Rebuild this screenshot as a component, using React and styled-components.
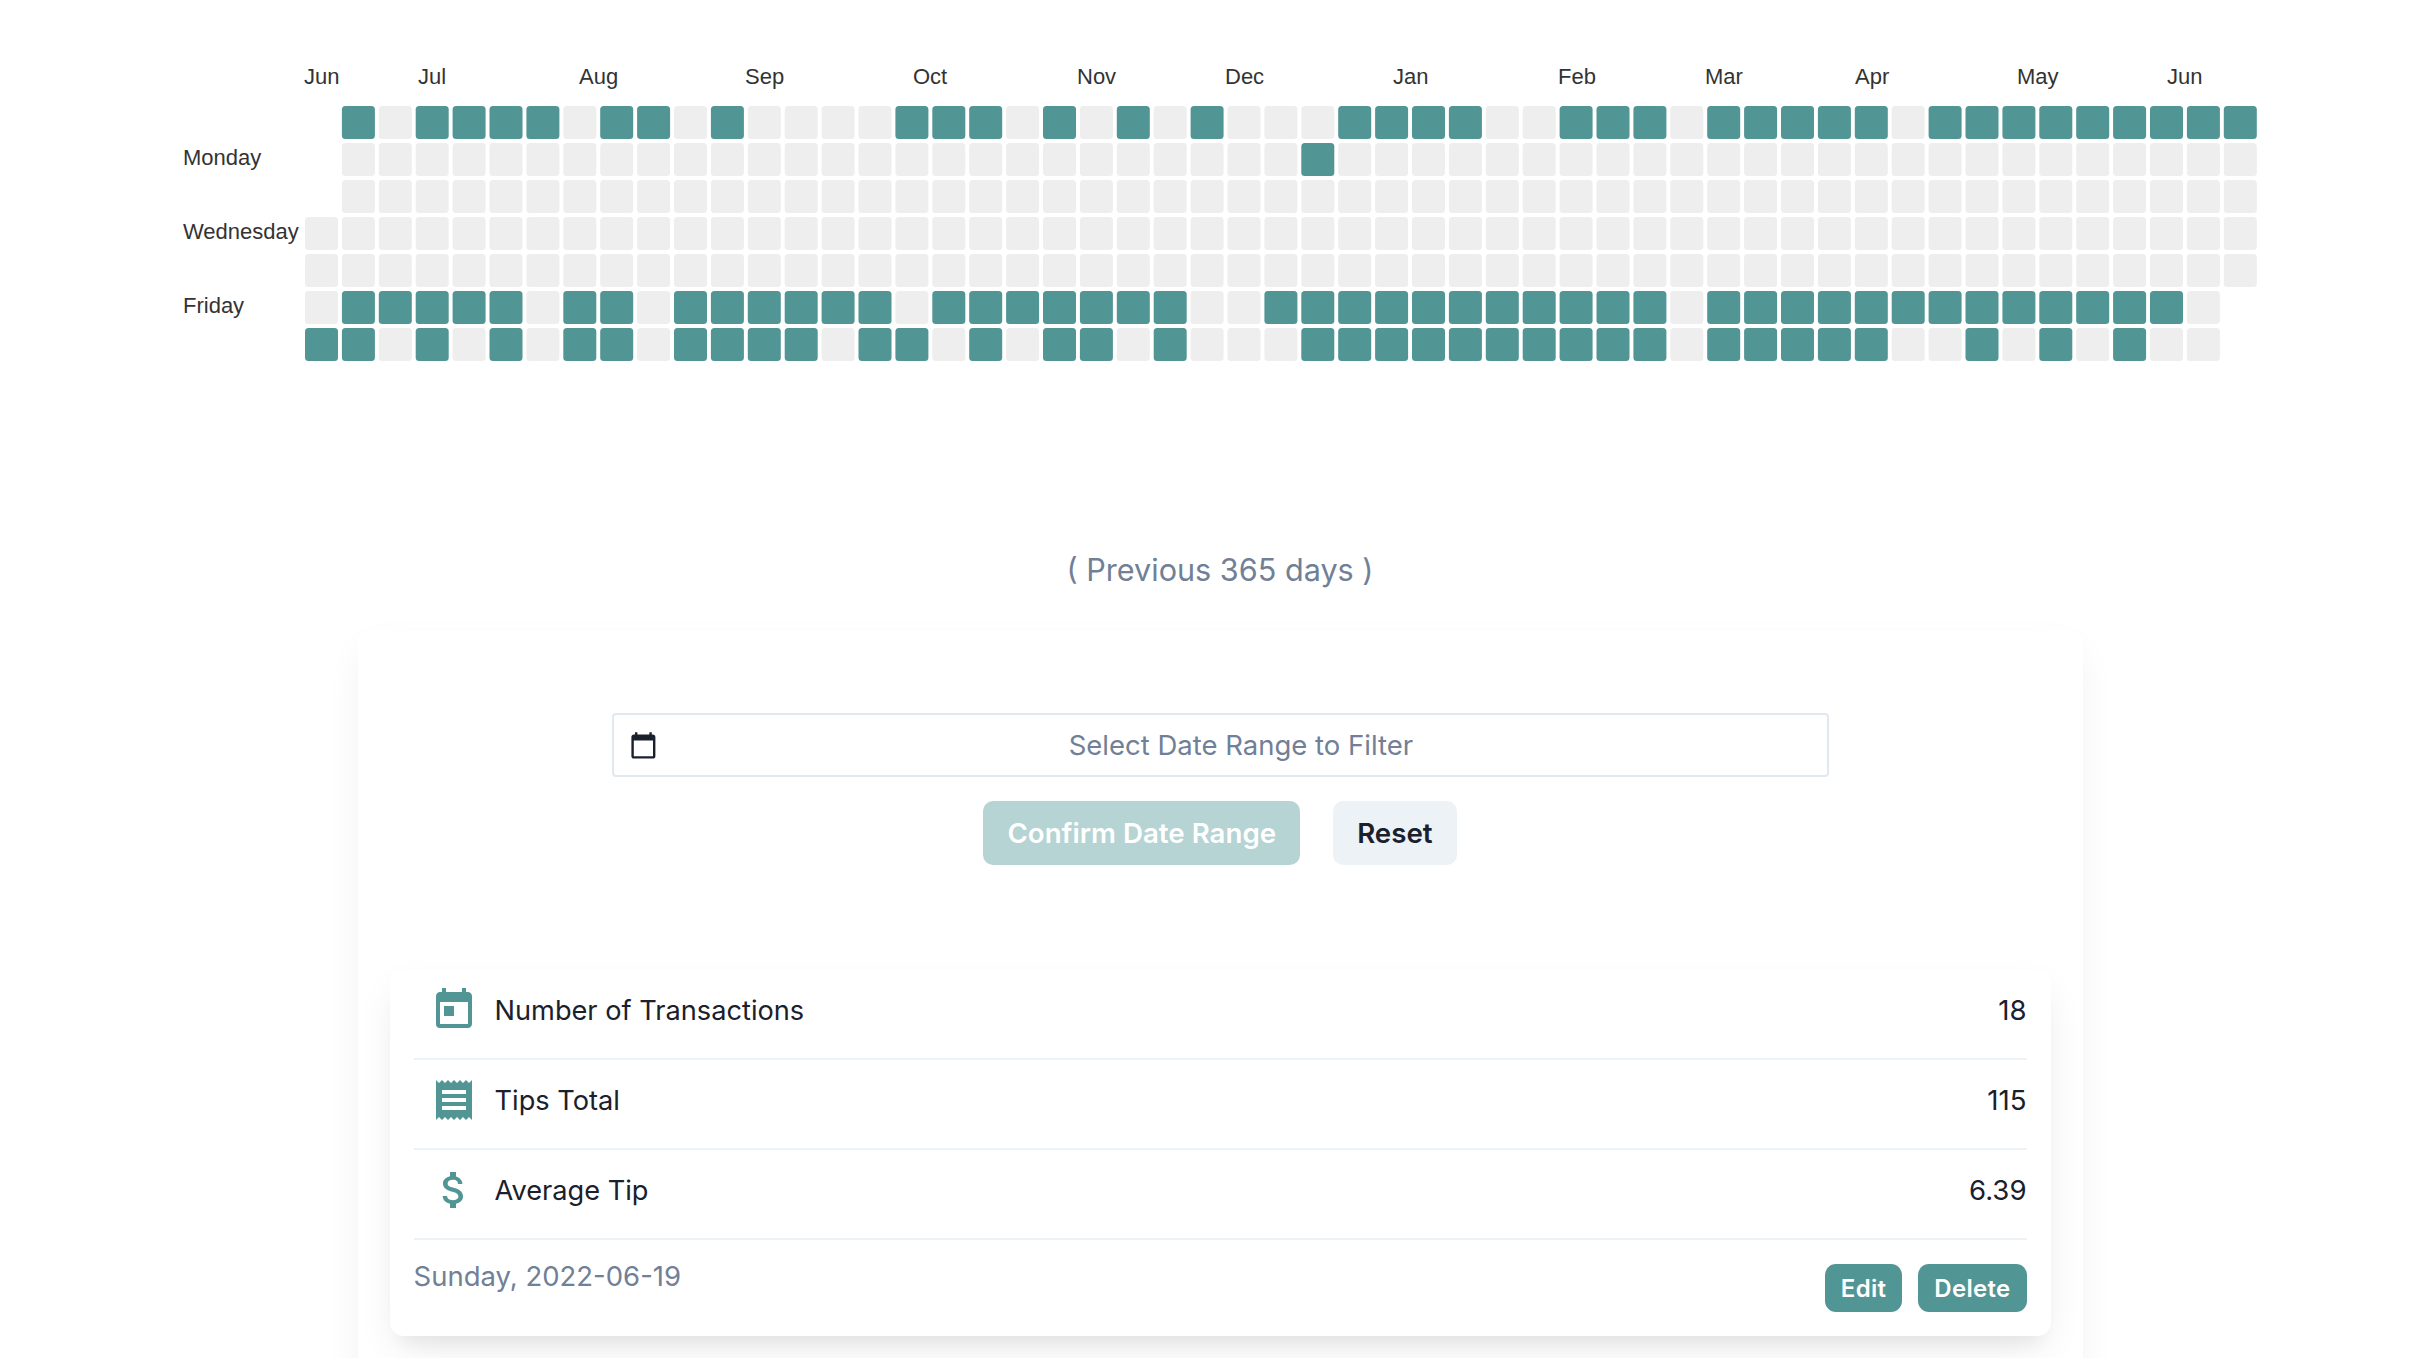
import React from 'react';
import styled, { createGlobalStyle } from 'styled-components';
import { MdAttachMoney, MdCalendarToday, MdReceipt, MdToday } from 'react-icons/md';

const TEAL = '#519594';
const EMPTY = '#eeeeee';

const GlobalStyle = createGlobalStyle`
  html, body { margin: 0; padding: 0; background: #fff; }
  body { font-family: Inter, "Noto Sans", sans-serif; color: #1a202c; }
`;

const Page = styled.div`
  width: 2432px;
  height: 1358px;
  overflow: hidden;
`;
const Chart = styled.svg`
  display: block;
  width: 2432px;
  height: 380px;
`;
const ChartLabel = styled.text`
  font-family: "Liberation Sans", Arial, sans-serif;
  font-size: 22px;
  fill: #333;
`;
const Content = styled.div`
  padding-left: 8px;
`;
const Subtitle = styled.p`
  margin: 170px 0 0;
  height: 40px;
  line-height: 40px;
  text-align: center;
  font-size: 30.6px;
  color: #718096;
`;
const Panel = styled.section`
  width: 1725px;
  height: 900px;
  margin: 40px auto 0;
  padding: 83px 32px 0;
  box-sizing: border-box;
  border-radius: 12px;
  background: #fff;
  box-shadow: 0 16px 40px -8px rgba(0, 0, 0, 0.08);
`;
const DateField = styled.div`
  display: flex;
  align-items: center;
  width: 1217px;
  height: 64px;
  margin: 0 auto;
  padding: 0 17px 0 15px;
  box-sizing: border-box;
  border: 2px solid #e2e8f0;
  border-radius: 4px;
`;
const Placeholder = styled.span`
  flex: 1;
  padding-left: 15px;
  text-align: center;
  font-size: 27.5px;
  color: #718096;
`;
const Actions = styled.div`
  display: flex;
  justify-content: center;
  gap: 33px;
  margin-top: 24px;
`;
const FilterButton = styled.button`
  height: 64px;
  padding: 0 24px;
  border: 0;
  border-radius: 10px;
  font: 600 27.7px Inter, sans-serif;
  color: ${p => (p.$primary ? '#fff' : '#1a202c')};
  background: ${p => (p.$primary ? '#b5d4d3' : '#edf2f7')};
`;
const Summary = styled.div`
  height: 366px;
  margin-top: 105px;
  padding: 0 24px;
  box-sizing: border-box;
  border-radius: 14px;
  background: #fff;
  box-shadow: 0 16px 40px -8px rgba(0, 0, 0, 0.1), 0 16px 16px -8px rgba(0, 0, 0, 0.04);
`;
const Row = styled.div`
  display: flex;
  align-items: center;
  height: 90px;
  padding-bottom: 8px;
  box-sizing: border-box;
  border-bottom: 2px solid #edf2f7;
`;
const IconSlot = styled.span`
  display: flex;
  font-size: 48px;
  margin: 0 17px 0 16px;
  color: ${TEAL};
`;
const RowLabel = styled.span`
  flex: 1;
  font-size: 27.2px;
`;
const RowValue = styled.span`
  font-size: 27.6px;
`;
const Footer = styled.div`
  display: flex;
  justify-content: space-between;
  align-items: flex-start;
  padding-top: 24px;
`;
const DateText = styled.span`
  font-size: 27.5px;
  line-height: 24px;
  color: #718096;
`;
const FooterActions = styled.div`
  display: flex;
  gap: 16px;
`;
const SmallButton = styled.button`
  height: 48px;
  padding: 0 16px;
  border: 0;
  border-radius: 11px;
  font: 600 24px Inter, sans-serif;
  letter-spacing: 0.3px;
  color: #fff;
  background: ${TEAL};
`;

const COLUMNS = 53;
const CELL = 33;
const PITCH_X = 36.9;
const PITCH_Y = 37;

// inclusive [from, to] column runs that have activity, one list per weekday row
const ACTIVE = [
  [[1, 1], [3, 6], [8, 9], [11, 11], [16, 18], [20, 20], [22, 22], [24, 24], [28, 31], [34, 36], [38, 42], [44, 52]],
  [[27, 27]],
  [],
  [],
  [],
  [[1, 5], [7, 8], [10, 15], [17, 23], [26, 36], [38, 50]],
  [[0, 1], [3, 3], [5, 5], [7, 8], [10, 13], [15, 16], [18, 18], [20, 21], [23, 23], [27, 36], [38, 42], [45, 45], [47, 47], [49, 49]],
];

// first and last column that is drawn in each row
const RANGE = [[1, 52], [1, 52], [1, 52], [0, 52], [0, 52], [0, 51], [0, 51]];

const MONTHS = [
  ['Jun', 304], ['Jul', 418], ['Aug', 579], ['Sep', 745], ['Oct', 913], ['Nov', 1077], ['Dec', 1225],
  ['Jan', 1393], ['Feb', 1558], ['Mar', 1705], ['Apr', 1855], ['May', 2017], ['Jun', 2167],
];

const WEEKDAYS = [['Monday', 165], ['Wednesday', 239], ['Friday', 313]];

const isActive = (row, col) => ACTIVE[row].some(([a, b]) => col >= a && col <= b);

const Heatmap = () => (
  <Chart viewBox="0 0 2432 380">
    {MONTHS.map(([name, x]) => <ChartLabel key={name + x} x={x} y={84}>{name}</ChartLabel>)}
    {WEEKDAYS.map(([name, y]) => <ChartLabel key={name} x={183} y={y}>{name}</ChartLabel>)}
    {RANGE.map(([from, to], row) =>
      Array.from({ length: COLUMNS }, (_, col) => col)
        .filter(col => col >= from && col <= to)
        .map(col => (
          <rect
            key={`${row}-${col}`}
            x={305 + col * PITCH_X}
            y={106 + row * PITCH_Y}
            width={CELL}
            height={CELL}
            rx={3.5}
            fill={isActive(row, col) ? TEAL : EMPTY}
          />
        )))}
  </Chart>
);

const rows = [
  { icon: <MdToday />, label: 'Number of Transactions', value: '18' },
  { icon: <MdReceipt />, label: 'Tips Total', value: '115' },
  { icon: <MdAttachMoney />, label: 'Average Tip', value: '6.39' },
];

const App = () => (
  <Page>
    <GlobalStyle />
    <Heatmap />
    <Content>
      <Subtitle>( Previous 365 days )</Subtitle>
      <Panel>
        <DateField>
          <MdCalendarToday size={28.8} />
          <Placeholder>Select Date Range to Filter</Placeholder>
        </DateField>
        <Actions>
          <FilterButton $primary>Confirm Date Range</FilterButton>
          <FilterButton>Reset</FilterButton>
        </Actions>
        <Summary>
          {rows.map(row => (
            <Row key={row.label}>
              <IconSlot>{row.icon}</IconSlot>
              <RowLabel>{row.label}</RowLabel>
              <RowValue>{row.value}</RowValue>
            </Row>
          ))}
          <Footer>
            <DateText>Sunday, 2022-06-19</DateText>
            <FooterActions>
              <SmallButton>Edit</SmallButton>
              <SmallButton>Delete</SmallButton>
            </FooterActions>
          </Footer>
        </Summary>
      </Panel>
    </Content>
  </Page>
);

export default App;
